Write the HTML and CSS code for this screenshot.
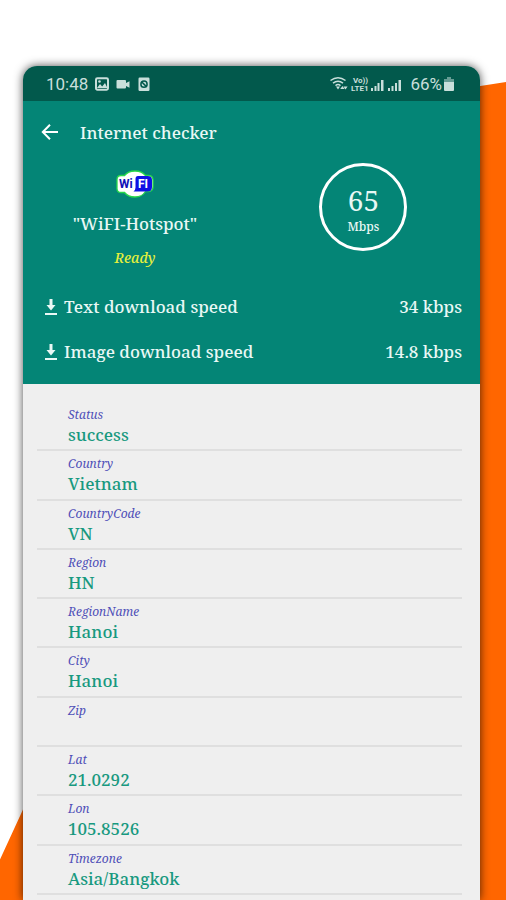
FILE: index.html
```html
<!DOCTYPE html>
<html lang="en">
<head>
<meta charset="utf-8">
<meta name="viewport" content="width=device-width, initial-scale=1">
<title>Internet checker</title>
<link rel="stylesheet" href="styles.css">
</head>
<body>
<div class="backdrop"></div>
<main class="phone">
  <div class="statusbar">
    <span>10:48</span>
    <svg class="left" width="56" height="16" viewBox="0 0 56 16" aria-hidden="true">
      <rect x="1" y="2.300" width="12" height="11.400" rx="1.400" fill="none" stroke="currentColor" stroke-width="2"/>
      <path d="M2 12l3-4 2.200 2.600L10 7l2.500 5z" fill="currentColor"/><circle cx="4.500" cy="5.500" r="1.300" fill="currentColor"/>
      <path d="M22.500 4h7.500q1 0 1 1v2l3.500-1.800v6.600L31 10v1.500q0 1-1 1h-7.500q-1 0-1-1V5q0-1 1-1z" fill="currentColor"/>
      <rect x="43.500" y="1.500" width="11" height="13.500" rx="1.200" fill="currentColor"/>
      <circle cx="49" cy="8.200" r="3.100" fill="none" stroke="#02594c" stroke-width="1.500"/><path d="M46.800 6l4.400 4.400" stroke="#02594c" stroke-width="1.500"/>
    </svg>
    <svg class="right" width="72" height="16" viewBox="0 0 72 16" aria-hidden="true">
      <path d="M0.500 4.500q7.500-5.500 15 0M3 7.200q5-4 10 0M5.500 9.600q2.500-2 5 0" fill="none" stroke="currentColor" stroke-width="1.500"/>
      <path d="M6 10.500h4L8 13.500zM10.200 13l2.200-3 2.200 3zM13.400 10.500h4.200L15.500 13.500z" fill="currentColor"/>
      <g class="volte" fill="currentColor"><text x="23" y="7">Vo))</text><text x="21" y="15">LTE1</text></g>
      <path d="M41 12h2v3h-2zM44.500 10h2v5h-2zM47.500 7h2v8h-2zM51 4h2.500v11H51zM58 12h2v3h-2zM61.500 10h2v5h-2zM65 7h2v8h-2zM68.500 4h2.500v11h-2.500z" fill="currentColor"/>
    </svg>
    <span>66%</span>
    <svg class="battery" width="10" height="14" viewBox="0 0 10 14" aria-hidden="true"><path d="M3 0h4v2h3v3H0V2h3z" fill="currentColor" opacity=".5"/><path d="M0 5h10v8q0 1-1 1H1q-1 0-1-1z" fill="currentColor"/></svg>
  </div>

  <header class="top">
    <div class="appbar">
      <button class="back" type="button" aria-label="Back"><svg width="18" height="18" viewBox="0 0 18 18" aria-hidden="true"><path d="M17 9H2M9 1.800L1.800 9 9 16.200" fill="none" stroke="currentColor" stroke-width="2"/></svg></button>
      <h1>Internet checker</h1>
    </div>
    <section class="summary">
      <div class="network">
        <svg width="38" height="28" viewBox="0 0 38 28" role="img" aria-label="WiFi">
          <path d="M5 5.500h3.500Q12 1 19 1t10.500 4.500H32Q37 5.500 37 10v7q0 4.500-5 4.500h-2.500Q26 27 19 27T8.500 22.500H5q-4 0-4-4v-9q0-4 4-4z" fill="#fff" stroke="#28d94a" stroke-width="1.300"/>
          <path d="M22 6H31.500q4.500 0 4.500 4v7q0 4.500-4.500 4.500H17.500q2-1.500 2-4V9q0-3 2.500-3z" fill="#1010e4"/>
          <text x="3" y="18" class="logo" fill="#1010b8">Wi</text>
          <text x="22" y="18" class="logo" fill="#fff">FI</text>
        </svg>
        <p class="ssid">"WiFI-Hotspot"</p>
        <p class="state">Ready</p>
      </div>
      <div class="dial"><strong>65</strong><span>Mbps</span></div>
    </section>
    <dl class="speeds">
      <div><dt><svg width="12" height="16" viewBox="0 0 12 16" aria-hidden="true"><path d="M4.500 0h3v6H10.500L6 11.500 1.500 6h3zM0 14h12v2H0z" fill="currentColor"/></svg>Text download speed</dt><dd>34 kbps</dd></div>
      <div><dt><svg width="12" height="16" viewBox="0 0 12 16" aria-hidden="true"><path d="M4.500 0h3v6H10.500L6 11.500 1.500 6h3zM0 14h12v2H0z" fill="currentColor"/></svg>Image download speed</dt><dd>14.8 kbps</dd></div>
    </dl>
  </header>

  <dl class="details">
    <div><dt>Status</dt><dd>success</dd></div>
    <div><dt>Country</dt><dd>Vietnam</dd></div>
    <div><dt>CountryCode</dt><dd>VN</dd></div>
    <div><dt>Region</dt><dd>HN</dd></div>
    <div><dt>RegionName</dt><dd>Hanoi</dd></div>
    <div><dt>City</dt><dd>Hanoi</dd></div>
    <div><dt>Zip</dt><dd></dd></div>
    <div><dt>Lat</dt><dd>21.0292</dd></div>
    <div><dt>Lon</dt><dd>105.8526</dd></div>
    <div><dt>Timezone</dt><dd>Asia/Bangkok</dd></div>
  </dl>
</main>
</body>
</html>
```
FILE: styles.css
```css
* { box-sizing: border-box; }
body, h1, p, dl, dd { margin: 0; }
body {
  min-height: 100vh;
  display: flex;
  padding: 66px 26px 0 23px;
  background: #fff;
  font-family: "Noto Serif", "Droid Serif", "DejaVu Serif Condensed", "DejaVu Serif", serif;
}
svg { display: block; flex: none; }
.backdrop {
  position: absolute;
  inset: 0;
  z-index: -1;
  background: #ff6600;
  clip-path: polygon(100% 9.1%, 60% 12.6%, 30% 40%, 4.5% 90%, 0 95.5%, 0 100%, 100% 100%);
}
.phone {
  flex: 1;
  min-width: 0;
  display: flex;
  flex-direction: column;
  border-radius: 14px 14px 0 0;
  overflow: hidden;
  background: #efefef;
  box-shadow: 0 0 10px rgba(0, 0, 0, .7);
}
.statusbar {
  height: 35px;
  display: flex;
  align-items: center;
  padding: 0 26px 0 23px;
  background: #02594c;
  color: #c9dfdb;
  font: 17px "Roboto", sans-serif;
}
.left { margin-left: 7px; }
.right { margin: 0 8px 0 auto; }
.battery { margin-left: 2px; }
.volte { font: 700 8px "Roboto", sans-serif; }
.top {
  background: #048576;
  color: #e9f8f5;
  padding-bottom: 10px;
  font-weight: 500;
}
.appbar {
  height: 62px;
  display: flex;
  align-items: center;
  gap: 21px;
  padding-left: 18px;
}
.back {
  display: flex;
  padding: 0;
  border: 0;
  background: none;
  color: #fff;
}
h1 { font-size: 17px; font-weight: 500; }
.summary {
  display: grid;
  grid-template-columns: 49fr 51fr;
  height: 121px;
}
.network {
  display: flex;
  flex-direction: column;
  align-items: center;
  padding-top: 7px;
}
.logo { font: 700 12px "Roboto", sans-serif; }
.ssid { margin-top: 13px; font-size: 17px; line-height: 26px; }
.state {
  margin-top: 11px;
  font-size: 14px;
  line-height: 20px;
  font-style: italic;
  color: #e6f03c;
}
.dial {
  justify-self: center;
  width: 88px;
  height: 88px;
  display: flex;
  flex-direction: column;
  align-items: center;
  padding-top: 16px;
  border: 3px solid #fff;
  border-radius: 50%;
}
.dial strong { font-size: 28px; font-weight: 400; line-height: 36px; }
.dial span { font-size: 12px; line-height: 18px; }
.speeds { padding: 0 18px 0 22px; }
.speeds div {
  height: 45px;
  display: flex;
  align-items: center;
  justify-content: space-between;
  font-size: 17px;
}
.speeds dt { display: flex; align-items: center; gap: 7px; }
.details {
  flex: 1;
  display: grid;
  grid-auto-rows: 1fr;
  padding: 18px 18px 5px 14px;
}
.details div {
  min-height: 49px;
  padding: 5px 0 0 31px;
  border-bottom: 2px solid #dfdfdf;
}
.details dt {
  font-size: 12px;
  line-height: 16px;
  font-style: italic;
  color: #5050b8;
}
.details dd {
  font-size: 17px;
  line-height: 23px;
  font-weight: 500;
  color: #18997f;
}
```
